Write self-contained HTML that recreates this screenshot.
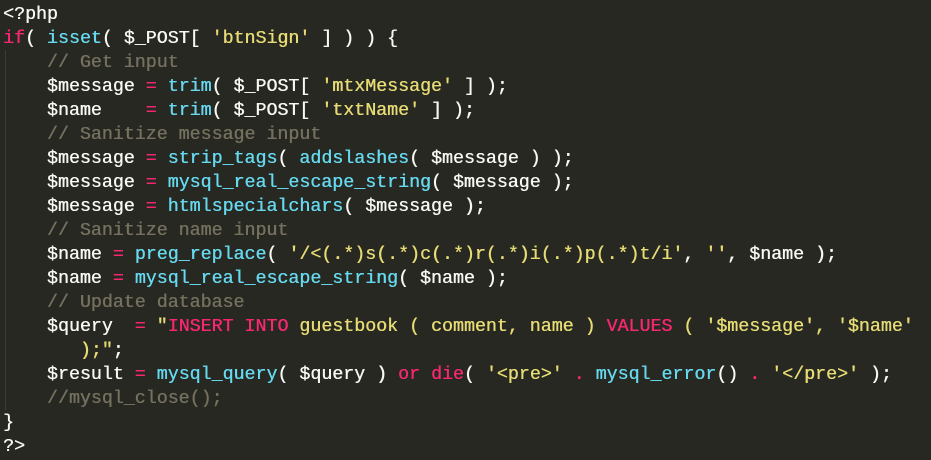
<!DOCTYPE html>
<html><head><style>
html,body{margin:0;padding:0;background:#272822;width:931px;height:460px;overflow:hidden}
pre{margin:0;padding:3px 0 0 3px;font-family:"Liberation Mono","DejaVu Sans Mono",monospace;font-size:18.3px;line-height:24px;color:#f8f8f2;position:relative;text-shadow:0.4px 0 0 currentColor}
.k{color:#f92672}.f{color:#66d9ef}.s{color:#e6db74}.c{color:#75715e}
.g{position:absolute;left:5px;top:50px;width:1px;height:360px;background:#3b3c35}
</style></head><body>
<pre><div class="g"></div>&lt;?php
<span class="k">if</span>( <span class="f">isset</span>( $_POST[ <span class="s">'btnSign'</span> ] ) ) {
    <span class="c">// Get input</span>
    $message <span class="k">=</span> <span class="f">trim</span>( $_POST[ <span class="s">'mtxMessage'</span> ] );
    $name    <span class="k">=</span> <span class="f">trim</span>( $_POST[ <span class="s">'txtName'</span> ] );
    <span class="c">// Sanitize message input</span>
    $message <span class="k">=</span> <span class="f">strip_tags</span>( <span class="f">addslashes</span>( $message ) );
    $message <span class="k">=</span> <span class="f">mysql_real_escape_string</span>( $message );
    $message <span class="k">=</span> <span class="f">htmlspecialchars</span>( $message );
    <span class="c">// Sanitize name input</span>
    $name <span class="k">=</span> <span class="f">preg_replace</span>( <span class="s">'/&lt;(.*)s(.*)c(.*)r(.*)i(.*)p(.*)t/i'</span>, <span class="s">''</span>, $name );
    $name <span class="k">=</span> <span class="f">mysql_real_escape_string</span>( $name );
    <span class="c">// Update database</span>
    $query  <span class="k">=</span> <span class="s">"<span class="k">INSERT INTO</span> guestbook ( comment, name ) <span class="k">VALUES</span> ( '$message', '$name'</span>
       <span class="s">);"</span>;
    $result <span class="k">=</span> <span class="f">mysql_query</span>( $query ) <span class="k">or</span> <span class="k">die</span>( <span class="s">'&lt;pre&gt;'</span> <span class="k">.</span> <span class="f">mysql_error</span>() <span class="k">.</span> <span class="s">'&lt;/pre&gt;'</span> );
    <span class="c">//mysql_close();</span>
}
?&gt;</pre>
</body></html>
